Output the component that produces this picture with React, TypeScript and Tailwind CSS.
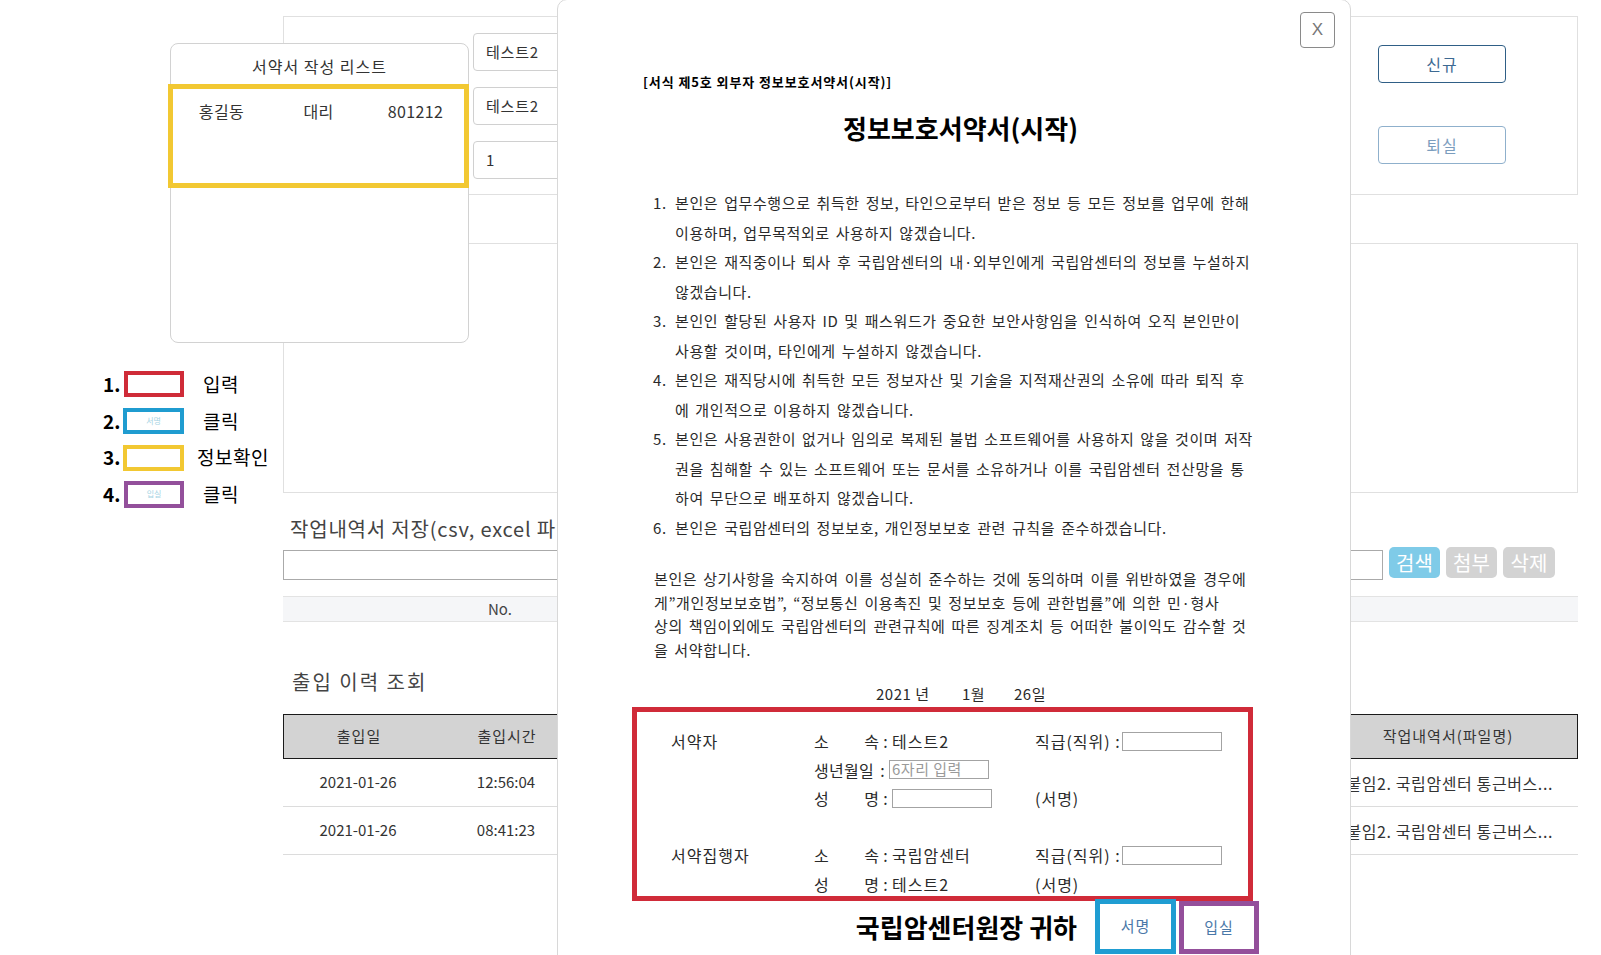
import type { ReactNode } from "react"

const clauses = [
  ["본인은 업무수행으로 취득한 정보, 타인으로부터 받은 정보 등 모든 정보를 업무에 한해", "이용하며, 업무목적외로 사용하지 않겠습니다."],
  ["본인은 재직중이나 퇴사 후 국립암센터의 내·외부인에게 국립암센터의 정보를 누설하지", "않겠습니다."],
  ["본인인 할당된 사용자 ID 및 패스워드가 중요한 보안사항임을 인식하여 오직 본인만이", "사용할 것이며, 타인에게 누설하지 않겠습니다."],
  ["본인은 재직당시에 취득한 모든 정보자산 및 기술을 지적재산권의 소유에 따라 퇴직 후", "에 개인적으로 이용하지 않겠습니다."],
  [
    "본인은 사용권한이 없거나 임의로 복제된 불법 소프트웨어를 사용하지 않을 것이며 저작",
    "권을 침해할 수 있는 소프트웨어 또는 문서를 소유하거나 이를 국립암센터 전산망을 통",
    "하여 무단으로 배포하지 않겠습니다.",
  ],
  ["본인은 국립암센터의 정보보호, 개인정보보호 관련 규칙을 준수하겠습니다."],
]

const pledge = [
  "본인은 상기사항을 숙지하여 이를 성실히 준수하는 것에 동의하며 이를 위반하였을 경우에",
  "게\u201d개인정보보호법\u201d, \u201c정보통신 이용촉진 및 정보보호 등에 관한법률\u201d에 의한 민·형사",
  "상의 책임이외에도 국립암센터의 관련규칙에 따른 징계조치 등 어떠한 불이익도 감수할 것",
  "을 서약합니다.",
]

const visits = [
  { date: "2021-01-26", time: "12:56:04" },
  { date: "2021-01-26", time: "08:41:23" },
]

function Legend() {
  return (
    <aside className="w-[283px] shrink-0 pl-[103px] pt-[366px] text-black">
      <div className="flex h-[36.7px] items-center">
        <span className="w-[21px] text-[19px] font-bold">1.</span>
        <span className="h-[26px] w-[60px] border-[4px] border-[#cf2b38]" />
        <span className="ml-[19px] text-[19px] tracking-[0.5px]">입력</span>
      </div>
      <div className="flex h-[36.7px] items-center">
        <span className="w-[20px] text-[19px] font-bold">2.</span>
        <span className="flex h-[26px] w-[61px] items-center justify-center border-[4px] border-[#1f9cd0] text-[8px] text-[#a6d3e3]">서명</span>
        <span className="ml-[19px] text-[19px] tracking-[0.5px]">클릭</span>
      </div>
      <div className="flex h-[36.7px] items-center">
        <span className="w-[20px] text-[19px] font-bold">3.</span>
        <span className="h-[26px] w-[61px] border-[4px] border-[#f2c832]" />
        <span className="ml-[13px] text-[19px] tracking-[0.5px]">정보확인</span>
      </div>
      <div className="flex h-[36.7px] items-center">
        <span className="w-[21px] text-[19px] font-bold">4.</span>
        <span className="flex h-[27px] w-[60px] items-center justify-center border-[4px] border-[#93509b] text-[8px] text-[#a6d3e3]">입실</span>
        <span className="ml-[19px] text-[19px] tracking-[0.5px]">클릭</span>
      </div>
    </aside>
  )
}

function BackgroundPage() {
  return (
    <main className="w-[1295px] shrink-0 pt-[16px] text-[#333]">
      <section className="flex h-[179px] justify-between border border-[#e0e0e0]">
        <div className="flex flex-col gap-[16px] pl-[189px] pt-[16px]">
          {["테스트2", "테스트2", "1"].map((v, i) => (
            <div key={i} className="flex h-[38px] w-[320px] items-center rounded-[4px] border border-[#d0d0d0] px-[12px] text-[15px] tracking-[0.8px]">
              {v}
            </div>
          ))}
        </div>
        <div className="flex flex-col gap-[43px] pr-[71px] pt-[28px]">
          <button className="h-[38px] w-[128px] rounded-[4px] border border-[#2f5f86] text-[16px] tracking-[1px] text-[#3d6a93]">신규</button>
          <button className="h-[38px] w-[128px] rounded-[4px] border border-[#8fb0cc] text-[16px] tracking-[1px] text-[#7b9dbe]">퇴실</button>
        </div>
      </section>

      <section className="mt-[48px] h-[250px] border border-[#e0e0e0]" />

      <h2 className="mt-[22px] pl-[7px] text-[20px] leading-[28px] tracking-[0.8px] text-[#444]">작업내역서 저장(csv, excel 파일)</h2>
      <div className="mt-[4px] flex items-start">
        <div className="mt-[3px] h-[30px] flex-1 border border-[#aaaaaa]" />
        <div className="ml-[6px] flex gap-[6px] pr-[23px]">
          <button className="h-[31px] w-[51px] rounded-[5px] bg-[#7fcbe8] text-[20px] leading-[31px] text-white">검색</button>
          <button className="h-[31px] w-[51px] rounded-[5px] bg-[#d3d3d3] text-[20px] leading-[31px] text-white">첨부</button>
          <button className="h-[31px] w-[52px] rounded-[5px] bg-[#d3d3d3] text-[20px] leading-[31px] text-white">삭제</button>
        </div>
      </div>
      <div className="mt-[16px] grid h-[26px] grid-cols-[434px_1fr] items-center border-y border-[#e3e3e3] bg-[#f5f6f8] text-[15px] text-[#444]">
        <span className="text-center">No.</span>
        <span />
      </div>

      <h2 className="mt-[46px] pl-[9px] text-[20px] leading-[28px] tracking-[2px] text-[#444]">출입 이력 조회</h2>
      <div className="mt-[18px]">
        <div className="grid h-[45px] grid-cols-[150px_146px_1fr_258px] items-center border-[1.5px] border-[#1a1a1a] bg-[#d3d3d3] text-center text-[15px] tracking-[1px] text-[#333]">
          <span>출입일</span>
          <span>출입시간</span>
          <span />
          <span>작업내역서(파일명)</span>
        </div>
        {visits.map((v) => (
          <div key={v.time} className="grid h-[48px] grid-cols-[150px_146px_1fr_258px] items-center border-b border-[#dcdcdc] text-[15px]">
            <span className="text-center">{v.date}</span>
            <span className="text-center">{v.time}</span>
            <span />
            <span className="flex justify-end whitespace-nowrap pr-[25px] text-[16px] tracking-[0.6px]">
              <span className="shrink-0">첨부 붙임2. 국립암센터 통근버스...</span>
            </span>
          </div>
        ))}
      </div>
    </main>
  )
}

function ListPanel() {
  return (
    <div className="absolute left-[170px] top-[43px] h-[300px] w-[299px] rounded-[8px] border border-[#d2d2d2] bg-white text-[#333]">
      <div className="pt-[11px] text-center text-[16px] leading-[22px] tracking-[1px]">서약서 작성 리스트</div>
      <div className="-ml-[3px] mt-[7px] h-[104px] w-[301px] border-[5px] border-[#f2c832] pt-[11px]">
        <div className="grid grid-cols-3 text-center text-[16px] leading-[22px] tracking-[0.4px]">
          <span>홍길동</span>
          <span>대리</span>
          <span>801212</span>
        </div>
      </div>
    </div>
  )
}

function Pair({ a, b }: { a: string; b: string }) {
  return (
    <span className="flex w-[66px] justify-between">
      <span>{a}</span>
      <span>{b}</span>
    </span>
  )
}

function Colon() {
  return <span className="w-[12px] text-center">:</span>
}

function Box({ placeholder }: { placeholder?: string }) {
  return (
    <input
      placeholder={placeholder}
      className="h-[19px] w-[100px] border border-[#a3a3a3] px-[2px] text-[15px] tracking-[0.5px] outline-none placeholder:text-[#9a9a9a]"
    />
  )
}

function Rank() {
  return (
    <>
      <span className="w-[87px] whitespace-nowrap">직급(직위) :</span>
      <Box />
    </>
  )
}

function SignRow({ who, mid, right }: { who?: string; mid?: ReactNode; right?: ReactNode }) {
  return (
    <div className="flex h-[28.6px] items-center">
      <span className="w-[177px] pl-[34px]">{who}</span>
      <span className="flex w-[221px] items-center">{mid}</span>
      <span className="flex items-center">{right}</span>
    </div>
  )
}

function Modal() {
  return (
    <div className="absolute left-[557px] top-[-1px] h-[990px] w-[794px] rounded-[10px] border border-[#d8d8d8] bg-white text-[#2a2a2a]">
      <div className="flex justify-end pr-[15px] pt-[12px]">
        <button className="flex h-[36px] w-[35px] items-center justify-center rounded-[4px] border border-[#8a8a8a] font-['Liberation_Sans',sans-serif] text-[17px] font-light text-[#777]">
          X
        </button>
      </div>

      <div className="ml-[74px] w-[621px]">
        <p className="mt-[26px] pl-[11px] text-[13px] font-bold leading-[16px] tracking-[0.9px] text-black">[서식 제5호 외부자 정보보호서약서(시작)]</p>
        <h1 className="mt-[21px] pl-[36px] text-center text-[26px] font-bold leading-[34px] text-black">정보보호서약서(시작)</h1>

        <ol className="mt-[43px] pl-[21px] text-[15px] leading-[29.5px] tracking-[0.6px] [word-spacing:2px]">
          {clauses.map((lines, i) => (
            <li key={i} className="flex">
              <span className="w-[22px] shrink-0">{i + 1}.</span>
              <div>
                {lines.map((l) => (
                  <div key={l} className="whitespace-nowrap">{l}</div>
                ))}
              </div>
            </li>
          ))}
        </ol>

        <div className="mt-[25px] pl-[22px] text-[15px] leading-[23.7px] tracking-[0.6px] [word-spacing:2px]">
          {pledge.map((l) => (
            <div key={l} className="whitespace-nowrap">{l}</div>
          ))}
        </div>

        <div className="mt-[20px] flex pl-[244px] text-[15px] leading-[24px] tracking-[0.5px]">
          <span className="w-[86px]">2021 년</span>
          <span className="w-[52px]">1월</span>
          <span>26일</span>
        </div>

        <div className="mt-[1px] h-[194px] border-[5px] border-[#d02b39] pt-[15px] text-[16px] tracking-[1px]">
          <SignRow who="서약자" mid={<><Pair a="소" b="속" /><Colon />테스트2</>} right={<Rank />} />
          <SignRow mid={<><span className="w-[63px] whitespace-nowrap tracking-[0.3px]">생년월일</span><Colon /><Box placeholder="6자리 입력" /></>} />
          <SignRow mid={<><Pair a="성" b="명" /><Colon /><Box /></>} right="(서명)" />
          <SignRow />
          <SignRow who="서약집행자" mid={<><Pair a="소" b="속" /><Colon />국립암센터</>} right={<Rank />} />
          <SignRow mid={<><Pair a="성" b="명" /><Colon />테스트2</>} right="(서명)" />
        </div>

        <div className="-mr-[6px] -mt-[2px] flex items-center justify-end">
          <span className="mr-[18px] text-[26px] font-bold text-black">국립암센터원장 귀하</span>
          <button className="h-[55px] w-[81px] border-[5px] border-[#1f9dd2] text-[15px] tracking-[1px] text-[#4a78a8]">서명</button>
          <button className="ml-[3px] mt-[2px] h-[53px] w-[80px] border-[5px] border-[#944f9b] text-[15px] tracking-[1px] text-[#4a78a8]">입실</button>
        </div>
      </div>
    </div>
  )
}

export default function App() {
  return (
    <div className="relative h-[955px] w-[1601px] overflow-hidden bg-white font-['Noto_Sans_CJK_KR','Noto_Sans',sans-serif]">
      <div className="flex">
        <Legend />
        <BackgroundPage />
      </div>
      <ListPanel />
      <Modal />
    </div>
  )
}
